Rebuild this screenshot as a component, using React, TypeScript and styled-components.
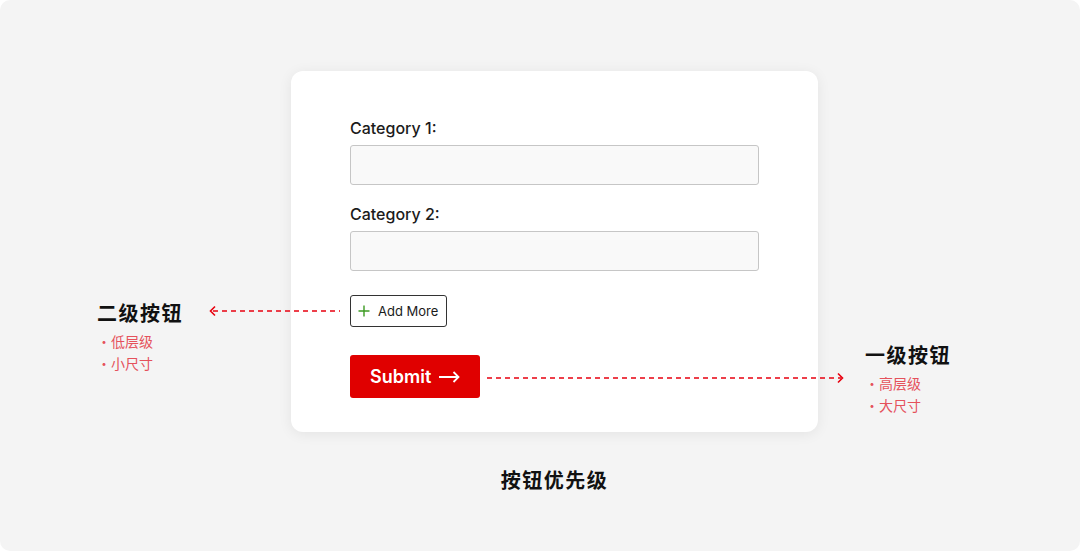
import React from 'react';
import styled, { createGlobalStyle } from 'styled-components';

const GlobalStyle = createGlobalStyle`
  body {
    margin: 0;
    background: #ffffff;
    font-family: Inter, 'Noto Sans CJK SC', sans-serif;
  }
`;

const Arrow = ({ width, dir }: { width: number; dir: 'left' | 'right' }) => (
  <svg width={width} height={12} viewBox={`0 0 ${width} 12`} fill='none'>
    <line
      x1={dir === 'left' ? 4 : 0}
      y1={6}
      x2={dir === 'left' ? width : width - 3}
      y2={6}
      stroke='#e8000f'
      strokeWidth={1.5}
      strokeDasharray='5 4'
    />
    {dir === 'left' ? (
      <path d='M6 1.5L1.5 6L6 10.5' stroke='#e8000f' strokeWidth={1.6} />
    ) : (
      <path d={`M${width - 6} 1.5L${width - 1.5} 6L${width - 6} 10.5`} stroke='#e8000f' strokeWidth={1.6} />
    )}
  </svg>
);

const App = () => {
  return (
    <>
      <GlobalStyle />
      <Page>
        <Note $top={228} $width={194}>
          <NoteTitle>二级按钮</NoteTitle>
          <NoteItem>低层级</NoteItem>
          <NoteItem>小尺寸</NoteItem>
        </Note>
        <Center>
          <Card>
            <Label>Category 1:</Label>
            <Input />
            <Label>Category 2:</Label>
            <Input />
            <AddRow>
              <LeftLink>
                <Arrow width={131} dir='left' />
              </LeftLink>
              <AddButton>
                <svg width='12' height='12' viewBox='0 0 12 12' fill='none'>
                  <path d='M6 0.5V11.5M0.5 6H11.5' stroke='#3c9a22' strokeWidth='1.4' />
                </svg>
                Add More
              </AddButton>
            </AddRow>
            <SubmitRow>
              <SubmitButton>
                Submit
                <svg width='21' height='12' viewBox='0 0 21 12' fill='none'>
                  <path d='M0 6H19.5M14.5 1L19.5 6L14.5 11' stroke='#ffffff' strokeWidth='1.8' />
                </svg>
              </SubmitButton>
              <RightLink>
                <Arrow width={357} dir='right' />
              </RightLink>
            </SubmitRow>
          </Card>
          <Caption>按钮优先级</Caption>
        </Center>
        <Note $top={270} $width={160} $offset={47}>
          <NoteTitle>一级按钮</NoteTitle>
          <NoteItem>高层级</NoteItem>
          <NoteItem>大尺寸</NoteItem>
        </Note>
      </Page>
    </>
  );
};

export default App;

const Page = styled.main`
  width: 1080px;
  height: 551px;
  box-sizing: border-box;
  background: #f4f4f4;
  border-radius: 10px;
  display: flex;
  align-items: flex-start;
  padding: 71px 0 0 97px;
  overflow: hidden;
`;

const Note = styled.aside<{ $top: number; $width: number; $offset?: number }>`
  width: ${(p) => p.$width}px;
  flex-shrink: 0;
  margin-top: ${(p) => p.$top}px;
  margin-left: ${(p) => p.$offset || 0}px;
  font-family: 'Noto Sans CJK SC', sans-serif;
`;

const NoteTitle = styled.h3`
  margin: 0 0 3px;
  font-size: 20px;
  line-height: 28px;
  font-weight: 700;
  letter-spacing: 1.5px;
  color: #111111;
`;

const NoteItem = styled.div`
  font-size: 14px;
  line-height: 22px;
  color: #e5515b;
  &::before {
    content: '・';
  }
`;

const Center = styled.div`
  display: flex;
  flex-direction: column;
  align-items: center;
`;

const Card = styled.section`
  width: 527px;
  height: 361px;
  box-sizing: border-box;
  background: #ffffff;
  border-radius: 12px;
  box-shadow: 0 2px 14px rgba(0, 0, 0, 0.07);
  padding: 47px 0 0 59px;
  display: flex;
  flex-direction: column;
  align-items: flex-start;
`;

const Label = styled.label`
  font-family: Inter, sans-serif;
  font-size: 16px;
  line-height: 20px;
  font-weight: 500;
  color: #1b1b1b;
  margin-bottom: 7px;
`;

const Input = styled.div`
  width: 409px;
  height: 40px;
  box-sizing: border-box;
  background: #f9f9f9;
  border: 1px solid #c6c6c6;
  border-radius: 3px;
  margin-bottom: 19px;
`;

const AddRow = styled.div`
  position: relative;
  margin-top: 5px;
`;

const LeftLink = styled.div`
  position: absolute;
  left: -141px;
  top: 10px;
  display: flex;
`;

const AddButton = styled.button`
  height: 32px;
  width: 97px;
  box-sizing: border-box;
  display: flex;
  align-items: center;
  gap: 8px;
  padding: 0 0 0 7px;
  background: #ffffff;
  border: 1px solid #333333;
  border-radius: 3px;
  font-family: Inter, sans-serif;
  font-size: 13px;
  font-weight: 400;
  color: #1b1b1b;
`;

const SubmitRow = styled.div`
  position: relative;
  margin-top: 28px;
`;

const RightLink = styled.div`
  position: absolute;
  left: 137px;
  top: 17px;
  display: flex;
`;

const SubmitButton = styled.button`
  height: 43px;
  width: 130px;
  box-sizing: border-box;
  display: flex;
  align-items: center;
  gap: 8px;
  padding: 0 0 0 20px;
  background: #e00000;
  border: none;
  border-radius: 3px;
  font-family: Inter, sans-serif;
  font-size: 18px;
  font-weight: 600;
  color: #ffffff;
`;

const Caption = styled.h2`
  margin: 35px 0 0;
  font-family: 'Noto Sans CJK SC', sans-serif;
  font-size: 20px;
  line-height: 26px;
  font-weight: 700;
  letter-spacing: 1.5px;
  color: #111111;
`;
